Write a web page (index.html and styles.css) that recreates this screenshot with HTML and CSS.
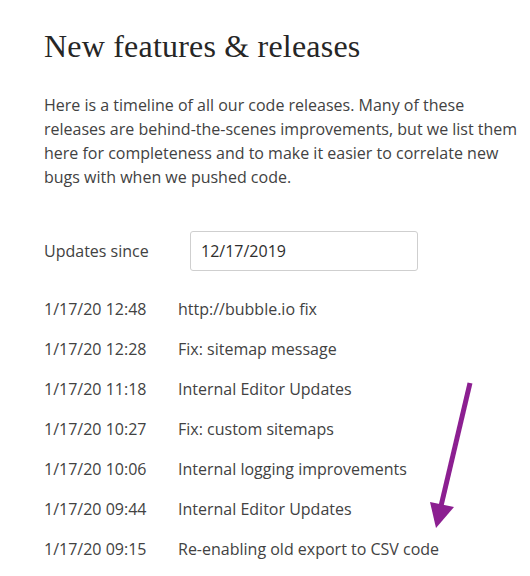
FILE: index.html
```html
<!DOCTYPE html>
<html>
<head>
<meta charset="utf-8">
<link rel="stylesheet" href="styles.css">
</head>
<body>
<div class="page">
  <h1 class="title">New features &amp; releases</h1>
  <p class="intro">Here is a timeline of all our code releases. Many of these releases are behind-the-scenes improvements, but we list them here for completeness and to make it easier to correlate new bugs with when we pushed code.</p>
  <div class="filter">
    <span class="filter-label">Updates since</span>
    <div class="date-input">12/17/2019</div>
  </div>
  <div class="releases">
    <div class="row"><span class="time">1/17/20 12:48</span><span class="desc">http://bubble.io fix</span></div>
    <div class="row"><span class="time">1/17/20 12:28</span><span class="desc">Fix: sitemap message</span></div>
    <div class="row"><span class="time">1/17/20 11:18</span><span class="desc">Internal Editor Updates</span></div>
    <div class="row"><span class="time">1/17/20 10:27</span><span class="desc">Fix: custom sitemaps</span></div>
    <div class="row"><span class="time">1/17/20 10:06</span><span class="desc">Internal logging improvements</span></div>
    <div class="row"><span class="time">1/17/20 09:44</span><span class="desc">Internal Editor Updates</span></div>
    <div class="row"><span class="time">1/17/20 09:15</span><span class="desc">Re-enabling old export to CSV code</span></div>
  </div>
  <svg class="arrow" width="530" height="576" viewBox="0 0 530 576">
    <line x1="470" y1="383" x2="441" y2="506" stroke="#8c1f91" stroke-width="5"/>
    <polygon points="430,502 454,507 436,528" fill="#8c1f91"/>
  </svg>
</div>
</body>
</html>
```

FILE: styles.css
```css
html, body {
  margin: 0;
  padding: 0;
  background: #ffffff;
}
.page {
  position: relative;
  width: 530px;
  height: 576px;
  overflow: hidden;
  padding: 0 0 0 44px;
  box-sizing: border-box;
  font-family: "Open Sans", sans-serif;
  color: #424242;
}
.title {
  margin: 0;
  padding-top: 25px;
  font-family: "Liberation Serif", serif;
  font-weight: normal;
  font-size: 32px;
  line-height: 42px;
  color: #262626;
  letter-spacing: 0.2px;
}
.intro {
  margin: 26px 0 0 0;
  width: 482px;
  font-size: 16px;
  line-height: 24px;
}
.filter {
  display: flex;
  align-items: center;
  margin-top: 42px;
  height: 40px;
}
.filter-label {
  width: 146px;
  font-size: 16px;
}
.date-input {
  width: 228px;
  height: 40px;
  box-sizing: border-box;
  border: 1px solid #cfcfcf;
  border-radius: 3px;
  padding: 0 10px;
  display: flex;
  align-items: center;
  font-size: 16px;
  color: #2e2e2e;
}
.releases {
  margin-top: 18px;
  display: flex;
  flex-direction: column;
}
.row {
  display: flex;
  height: 40px;
  align-items: center;
  font-size: 16px;
}
.time {
  width: 134px;
}
.arrow {
  position: absolute;
  left: 0;
  top: 0;
  pointer-events: none;
}
```
